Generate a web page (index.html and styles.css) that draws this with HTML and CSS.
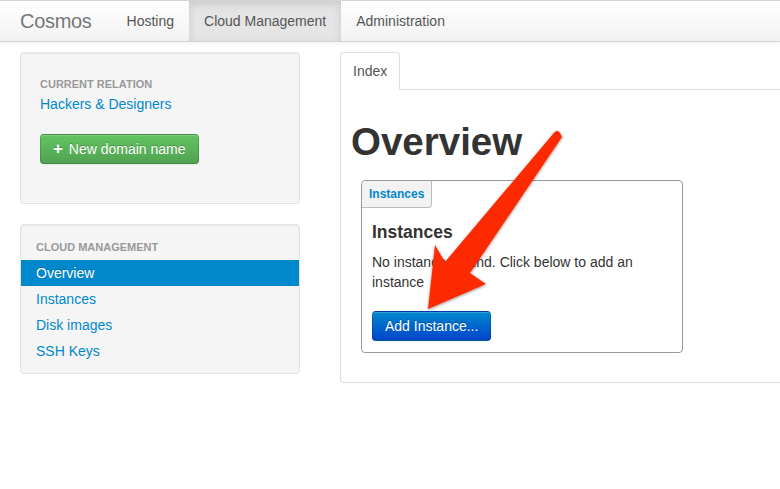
FILE: index.html
```html
<!DOCTYPE html>
<html lang="en">
<head>
  <meta charset="UTF-8">
  <title>Cosmos - Cloud Management</title>
  <link rel="stylesheet" href="styles.css">
</head>
<body>
  <div class="navbar">
    <a class="brand" href="#">Cosmos</a>
    <ul class="nav">
      <li><a href="#">Hosting</a></li>
      <li class="active"><a href="#">Cloud Management</a></li>
      <li><a href="#">Administration</a></li>
    </ul>
  </div>

  <div class="page">
    <div class="sidebar">
      <div class="well relation">
        <div class="label-head">Current relation</div>
        <a class="relation-link" href="#">Hackers &amp; Designers</a>
        <div><a class="btn btn-success" href="#"><span class="plus">+</span> New domain name</a></div>
      </div>

      <div class="well nav-list">
        <div class="label-head">Cloud Management</div>
        <a class="active" href="#">Overview</a>
        <a href="#">Instances</a>
        <a href="#">Disk images</a>
        <a href="#">SSH Keys</a>
      </div>
    </div>

    <div class="main">
      <div class="tabs">
        <a class="tab active" href="#">Index</a>
      </div>
      <div class="tab-content">
        <h1>Overview</h1>
        <div class="example">
          <div class="example-tab">Instances</div>
          <div class="example-body">
            <h4>Instances</h4>
            <p>No instances found. Click below to add an instance</p>
            <a class="btn btn-primary" href="#">Add Instance...</a>
          </div>
        </div>
      </div>
    </div>
  </div>

  <svg class="arrow" width="780" height="489" viewBox="0 0 780 489">
    <defs>
      <filter id="shadow" x="-20%" y="-20%" width="140%" height="140%">
        <feDropShadow dx="0" dy="1" stdDeviation="1.5" flood-color="#000" flood-opacity="0.45"/>
      </filter>
    </defs>
    <path d="M553,134 Q558,127 562,137 L470,273 L486,284 L428,309 L435,245 L445,262 Z" fill="#fd2a06" filter="url(#shadow)"/>
  </svg>
</body>
</html>
```

FILE: styles.css
```css
html, body {
  overflow: hidden;
}

body {
  margin: 0;
  font-family: "Liberation Sans", Arial, sans-serif;
  font-size: 14px;
  line-height: 20px;
  color: #333;
  background: #fff;
  position: relative;
}

a {
  color: #0088cc;
  text-decoration: none;
}

/* top bar */
.navbar {
  display: flex;
  height: 40px;
  background: linear-gradient(to bottom, #ffffff, #f2f2f2);
  border-top: 1px solid #d4d4d4;
  border-bottom: 1px solid #d4d4d4;
  box-shadow: 0 1px 4px rgba(0, 0, 0, 0.065);
}

.brand {
  padding: 10px 20px 10px 20px;
  font-size: 20px;
  color: #777;
  font-weight: normal;
  letter-spacing: -0.3px;
}

.nav {
  display: flex;
  list-style: none;
  margin: 0;
  padding: 0;
}

.nav li a {
  display: block;
  padding: 10px 15px;
  color: #555;
}

.nav li.active a {
  background: #e5e5e5;
  box-shadow: inset 0 3px 8px rgba(0, 0, 0, 0.125);
  color: #555;
}

/* layout */
.page {
  display: flex;
  gap: 40px;
  padding: 10px 0 0 20px;
}

.sidebar {
  width: 280px;
  flex-shrink: 0;
}

.well {
  background: #f5f5f5;
  border: 1px solid #e3e3e3;
  border-radius: 4px;
  box-shadow: inset 0 1px 1px rgba(0, 0, 0, 0.05);
  margin-bottom: 20px;
}

.label-head {
  font-size: 11px;
  font-weight: bold;
  line-height: 20px;
  color: #999;
  text-transform: uppercase;
}

.relation {
  padding: 21px 19px 19px;
}

.relation-link {
  display: block;
}

.btn {
  display: inline-block;
  padding: 4px 12px;
  border: 1px solid rgba(0, 0, 0, 0.15);
  border-bottom-color: rgba(0, 0, 0, 0.3);
  border-radius: 4px;
  color: #fff;
  text-shadow: 0 -1px 0 rgba(0, 0, 0, 0.25);
  box-shadow: inset 0 1px 0 rgba(255, 255, 255, 0.2), 0 1px 2px rgba(0, 0, 0, 0.05);
}

.btn-success {
  margin: 20px 0;
  background: linear-gradient(to bottom, #62c462, #51a351);
}

.plus {
  font-weight: bold;
  font-size: 17px;
  margin-right: 2px;
}

.btn-primary {
  background: linear-gradient(to bottom, #0088cc, #0044cc);
}

.nav-list {
  padding: 9px 0;
}

.nav-list .label-head {
  padding: 3px 15px;
}

.nav-list a {
  display: block;
  padding: 3px 15px;
}

.nav-list a.active {
  background: #0088cc;
  color: #fff;
  text-shadow: 0 -1px 0 rgba(0, 0, 0, 0.2);
}

/* main column */
.main {
  flex: 1;
  margin-right: -30px;
}

.tabs {
  display: flex;
  border-bottom: 1px solid #ddd;
}

.tab {
  padding: 8px 12px;
  margin-bottom: -1px;
  border: 1px solid #ddd;
  border-bottom-color: #fff;
  border-radius: 4px 4px 0 0;
  background: #fff;
  color: #555;
}

.tab-content {
  border: 1px solid #ddd;
  border-top: none;
  border-radius: 0 0 0 4px;
  padding: 22px 10px 29px;
}

h1 {
  margin: 10px 0 18px;
  font-size: 38.5px;
  line-height: 40px;
  font-weight: bold;
  color: #333;
}

.example {
  margin-left: 10px;
  width: 320px;
  border: 1px solid #999;
  border-radius: 4px;
}

.example-tab {
  display: inline-block;
  padding: 3px 7px;
  font-size: 12px;
  font-weight: bold;
  color: #0088cc;
  background: #f2f2f2;
  border-right: 1px solid #bbb;
  border-bottom: 1px solid #bbb;
  border-radius: 4px 0 4px 0;
}

.example-body {
  padding: 14px 10px 11px;
}

h4 {
  margin: 0 0 10px;
  font-size: 17.5px;
  line-height: 20px;
}

p {
  margin: 0 0 19px;
}

.arrow {
  position: absolute;
  top: 0;
  left: 0;
  pointer-events: none;
}
```
